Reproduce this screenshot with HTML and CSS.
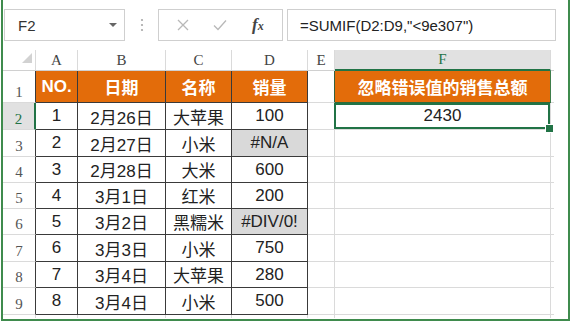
FILE: index.html
```html
<!DOCTYPE html>
<html lang="zh-CN">
<head>
    <meta charset="UTF-8">
    <title>SUMIF 忽略错误值</title>
    <link rel="stylesheet" href="styles.css">
</head>
<body>
    <div class="window">
        <!-- 编辑栏 -->
        <div class="formula-bar">
            <div class="name-box">
                <span>F2</span>
                <span class="caret"></span>
            </div>
            <div class="grip">
                <svg width="4" height="14" viewBox="0 0 4 14"><circle cx="2" cy="2" r="1.1" fill="#a8a8a8"/><circle cx="2" cy="7" r="1.1" fill="#a8a8a8"/><circle cx="2" cy="12" r="1.1" fill="#a8a8a8"/></svg>
            </div>
            <div class="btn-box">
                <svg class="ico" width="14" height="14" viewBox="0 0 14 14"><path d="M2 2 L12 12 M12 2 L2 12" stroke="#b8b8b8" stroke-width="1.3" fill="none"/></svg>
                <svg class="ico" width="16" height="14" viewBox="0 0 16 14"><path d="M2 7.5 L6 11.5 L14 2.5" stroke="#b8b8b8" stroke-width="1.3" fill="none"/></svg>
                <span class="fx"><i>f</i><span>x</span></span>
            </div>
            <div class="formula">=SUMIF(D2:D9,"&lt;9e307")</div>
        </div>

        <!-- 工作表 -->
        <div class="sheet">
            <table class="grid">
                <colgroup>
                    <col style="width:33px">
                    <col style="width:42px">
                    <col style="width:88px">
                    <col style="width:66px">
                    <col style="width:76px">
                    <col style="width:27px">
                    <col style="width:216px">
                    <col style="width:3px">
                </colgroup>
                <tr class="h-col">
                    <th class="corner"><svg width="10" height="10" viewBox="0 0 10 10"><polygon points="10,0 10,10 0,10" fill="#d2d2d2"/></svg></th>
                    <th>A</th><th>B</th><th>C</th><th>D</th><th>E</th><th class="sel-col">F</th><th class="g"></th>
                </tr>
                <tr class="r1">
                    <td class="rh">1</td>
                    <td class="t head">NO.</td>
                    <td class="t head">日期</td>
                    <td class="t head">名称</td>
                    <td class="t head">销量</td>
                    <td class="e e1"></td>
                    <td class="f1 head">忽略错误值的销售总额</td>
                    <td class="g"></td>
                </tr>
                <tr class="rh27">
                    <td class="rh sel-row">2</td>
                    <td class="t">1</td><td class="t">2月26日</td><td class="t">大苹果</td><td class="t">100</td>
                    <td class="e"></td><td class="f active">2430</td><td class="g"></td>
                </tr>
                <tr class="rh27">
                    <td class="rh">3</td>
                    <td class="t">2</td><td class="t">2月27日</td><td class="t">小米</td><td class="t err">#N/A</td>
                    <td class="e"></td><td class="f"></td><td class="g"></td>
                </tr>
                <tr class="rh26">
                    <td class="rh">4</td>
                    <td class="t">3</td><td class="t">2月28日</td><td class="t">大米</td><td class="t">600</td>
                    <td class="e"></td><td class="f"></td><td class="g"></td>
                </tr>
                <tr class="rh26">
                    <td class="rh">5</td>
                    <td class="t">4</td><td class="t">3月1日</td><td class="t">红米</td><td class="t">200</td>
                    <td class="e"></td><td class="f"></td><td class="g"></td>
                </tr>
                <tr class="rh26">
                    <td class="rh">6</td>
                    <td class="t">5</td><td class="t">3月2日</td><td class="t">黑糯米</td><td class="t err">#DIV/0!</td>
                    <td class="e"></td><td class="f"></td><td class="g"></td>
                </tr>
                <tr class="rh27">
                    <td class="rh">7</td>
                    <td class="t">6</td><td class="t">3月3日</td><td class="t">小米</td><td class="t">750</td>
                    <td class="e"></td><td class="f"></td><td class="g"></td>
                </tr>
                <tr class="rh26">
                    <td class="rh">8</td>
                    <td class="t">7</td><td class="t">3月4日</td><td class="t">大苹果</td><td class="t">280</td>
                    <td class="e"></td><td class="f"></td><td class="g"></td>
                </tr>
                <tr class="rh27">
                    <td class="rh">9</td>
                    <td class="t">8</td><td class="t">3月4日</td><td class="t">小米</td><td class="t">500</td>
                    <td class="e"></td><td class="f"></td><td class="g"></td>
                </tr>
                <tr class="r10">
                    <td class="rh"></td>
                    <td></td><td></td><td></td><td></td><td></td><td></td><td class="g"></td>
                </tr>
            </table>
        </div>
    </div>
</body>
</html>
```

FILE: styles.css
```css
/* 基础 */
* {
    box-sizing: border-box;
}

body {
    margin: 0;
    background-color: #fff;
    font-family: "Liberation Sans", "Noto Sans CJK SC", sans-serif;
    color: #222;
}

.window {
    margin-left: 1px;
    width: 569px;
    height: 321px;
    border-left: 2px solid #3f8b4d;
    border-right: 2px solid #3f8b4d;
    border-bottom: 2px solid #3f8b4d;
    overflow: hidden;
}

/* 编辑栏 */
.formula-bar {
    display: flex;
    align-items: center;
    height: 32px;
    margin-top: 9px;
    padding-left: 1px;
}

.name-box {
    display: flex;
    align-items: center;
    justify-content: space-between;
    width: 121px;
    height: 32px;
    padding: 0 7px 0 13px;
    border: 1px solid #cfcfcf;
    font-size: 15px;
    color: #333;
}

.caret {
    width: 0;
    height: 0;
    border-left: 4px solid transparent;
    border-right: 4px solid transparent;
    border-top: 4px solid #666;
}

.grip {
    display: flex;
    justify-content: center;
    width: 33px;
}

.btn-box {
    display: flex;
    align-items: center;
    width: 125px;
    height: 32px;
    padding-left: 17px;
    border: 1px solid #cfcfcf;
}

.btn-box .ico {
    margin-right: 22px;
}

.fx {
    margin-left: 2px;
    font-family: "Liberation Serif", serif;
    color: #444;
}

.fx i {
    font-size: 17px;
    font-weight: bold;
}

.fx span {
    font-size: 12px;
    font-style: italic;
    font-weight: bold;
}

.formula {
    display: flex;
    align-items: center;
    width: 269px;
    height: 32px;
    margin-left: 4px;
    padding-left: 12px;
    border: 1px solid #cfcfcf;
    font-size: 15px;
    color: #222;
}

/* 工作表 */
.sheet {
    margin-top: 9px;
    height: 268px;
    overflow: hidden;
}

.grid {
    width: 551px;
    table-layout: fixed;
    border-collapse: separate;
    border-spacing: 0;
}

.grid th,
.grid td {
    padding: 0;
    border-right: 1px solid #dadada;
    border-bottom: 1px solid #dadada;
    text-align: center;
    vertical-align: middle;
    white-space: nowrap;
    overflow: visible;
}

.grid td {
    font-size: 17px;
}

.h-col {
    height: 21px;
}

.h-col th {
    font-family: "Liberation Serif", serif;
    font-weight: normal;
    font-size: 15px;
    color: #444;
    border-bottom-color: #d0d0d0;
}

.h-col th.corner {
    text-align: right;
    vertical-align: bottom;
    padding: 0 3px 3px 0;
}

.h-col th.sel-col {
    background-color: #e1e1e1;
    color: #217346;
    border-bottom: 2px solid #217346;
}

.grid .g {
    border-right: none;
}

.r1 {
    height: 32px;
}

.rh27 {
    height: 27px;
}

.rh26 {
    height: 26px;
}

.r10 {
    height: 6px;
}

.r10 td {
    border-bottom: none;
}

/* 行号 */
.grid td.rh {
    font-family: "Liberation Serif", serif;
    font-size: 15px;
    color: #555;
    vertical-align: bottom;
    padding-bottom: 1px;
    border-right-color: #3a3a3a;
}

.grid .r10 td.rh {
    border-right-color: #dadada;
}

.grid td.sel-row {
    background-color: #e1e1e1;
    color: #217346;
    border-right: 2px solid #217346;
}

/* 数据表 */
.grid td.t {
    border-right-color: #3a3a3a;
    border-bottom-color: #3a3a3a;
}

.grid td.head {
    background-color: #e36c0a;
    color: #fff;
    font-weight: bold;
}

.grid td.err {
    background-color: #d9d9d9;
}

.grid td.e1 {
    border-right-color: #35603d;
}

.grid td.f1 {
    border-right-color: #3f7d4b;
    border-bottom-color: #2f6b3a;
}

/* 选中单元格 */
.grid td.active {
    position: relative;
}

.grid td.active::after {
    content: "";
    position: absolute;
    left: -1px;
    top: 0;
    right: 0;
    bottom: 0;
    border: 2px solid #217346;
}

.grid td.active::before {
    content: "";
    position: absolute;
    right: -4px;
    bottom: -4px;
    width: 7px;
    height: 7px;
    background-color: #217346;
    border: 1px solid #fff;
    z-index: 1;
}
```
